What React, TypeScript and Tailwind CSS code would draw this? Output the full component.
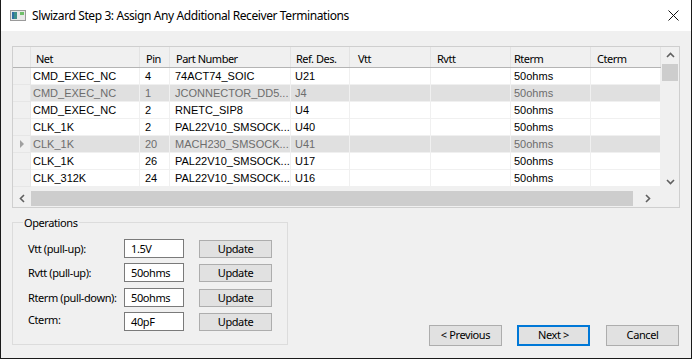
import { Fragment } from "react";

const cols = [
  { title: "Net", w: "w-[109px]", hp: "pl-[5px]", cp: "pl-[2px]" },
  { title: "Pin", w: "w-[30px]", hp: "pl-[6px]", cp: "pl-[5px]" },
  { title: "Part Number", w: "w-[121px]", hp: "pl-[6px]", cp: "pl-[5px]" },
  { title: "Ref. Des.", w: "w-[59px]", hp: "pl-[5px]", cp: "pl-[4px]" },
  { title: "Vtt", w: "w-[81px]", hp: "pl-[8px]", cp: "pl-[4px]" },
  { title: "Rvtt", w: "w-[80px]", hp: "pl-[6px]", cp: "pl-[4px]" },
  { title: "Rterm", w: "w-[80px]", hp: "pl-[3px]", cp: "pl-[3px]" },
  { title: "Cterm", w: "w-[70px]", hp: "pl-[6px]", cp: "pl-[4px]" },
];

const rows = [
  { cells: ["CMD_EXEC_NC", "4", "74ACT74_SOIC", "U21", "", "", "50ohms", ""], dim: false, sel: false },
  { cells: ["CMD_EXEC_NC", "1", "JCONNECTOR_DD5...", "J4", "", "", "50ohms", ""], dim: true, sel: false },
  { cells: ["CMD_EXEC_NC", "2", "RNETC_SIP8", "U4", "", "", "50ohms", ""], dim: false, sel: false },
  { cells: ["CLK_1K", "2", "PAL22V10_SMSOCK...", "U40", "", "", "50ohms", ""], dim: false, sel: false },
  { cells: ["CLK_1K", "20", "MACH230_SMSOCK...", "U41", "", "", "50ohms", ""], dim: true, sel: true },
  { cells: ["CLK_1K", "26", "PAL22V10_SMSOCK...", "U17", "", "", "50ohms", ""], dim: false, sel: false },
  { cells: ["CLK_312K", "24", "PAL22V10_SMSOCK...", "U16", "", "", "50ohms", ""], dim: false, sel: false },
];

const ops = [
  { label: "Vtt (pull-up):", value: "1.5V" },
  { label: "Rvtt (pull-up):", value: "50ohms" },
  { label: "Rterm (pull-down):", value: "50ohms" },
  { label: "Cterm:", value: "40pF" },
];

const ui = "font-['Noto_Sans',sans-serif] text-[11px] tracking-[-0.4px] text-black";

const Chevron = ({ dir }: { dir: "up" | "down" | "left" | "right" }) => {
  const pts = {
    up: "1,6 4.5,2.5 8,6",
    down: "1,3 4.5,6.5 8,3",
    left: "6,1 2.5,4.5 6,8",
    right: "3,1 6.5,4.5 3,8",
  }[dir];
  return (
    <svg width="9" height="9" viewBox="0 0 9 9">
      <polyline points={pts} fill="none" stroke="#606060" strokeWidth="1.6" />
    </svg>
  );
};

const Grid = () => (
  <div className="w-[668px] h-[162px] border border-[#cfcfcf] bg-[#f0f0f0] flex flex-col">
    <div className="flex h-[143px]">
      <div className="flex flex-col w-[648px]">
        {/* header */}
        <div className={`flex h-[21px] bg-[#f0f0f0] border-b border-[#b4b4b4] ${ui} tracking-[-0.5px]`}>
          <div className="w-[18px] border-r border-[#e3e3e3]" />
          {cols.map((c) => (
            <div key={c.title} className={`${c.w} ${c.hp} border-r border-[#e3e3e3] flex items-center leading-none pt-[2px]`}>
              {c.title}
            </div>
          ))}
        </div>
        {rows.map((r, i) => (
          <div key={i} className={`flex h-[17px] font-['Liberation_Sans',sans-serif] text-[11px] ${r.dim ? "text-[#6d6d6d]" : "text-black"}`}>
            <div className="w-[18px] bg-[#f0f0f0] border-r border-b border-[#e6e6e6] flex items-center justify-center">
              {r.sel && (
                <svg width="6" height="8" viewBox="0 0 6 8">
                  <polygon points="1,0 5,4 1,8" fill="#a0a0a0" />
                </svg>
              )}
            </div>
            {r.cells.map((v, j) => (
              <div
                key={j}
                className={`${cols[j].w} ${cols[j].cp} ${r.dim ? "bg-[#e0e0e0]" : "bg-white"} border-r border-b border-[#f0f0f0] flex items-center leading-none whitespace-nowrap overflow-hidden`}
              >
                {v}
              </div>
            ))}
          </div>
        ))}
      </div>
      {/* vertical scrollbar */}
      <div className="w-[18px] flex flex-col bg-[#f0f0f0]">
        <div className="h-[17px] flex items-center justify-center">
          <Chevron dir="up" />
        </div>
        <div className="h-[17px] bg-[#cdcdcd] mx-[1px]" />
        <div className="flex-1" />
        <div className="h-[17px] flex items-center justify-center">
          <Chevron dir="down" />
        </div>
      </div>
    </div>
    {/* horizontal scrollbar */}
    <div className="flex h-[17px] bg-[#f0f0f0]">
      <div className="w-[18px] flex items-center justify-center">
        <Chevron dir="left" />
      </div>
      <div className="w-[602px] bg-[#cdcdcd] my-[1px]" />
      <div className="flex-1 flex items-center justify-center pr-[18px]">
        <Chevron dir="right" />
      </div>
    </div>
  </div>
);

const Button = ({ text, primary }: { text: string; primary?: boolean }) => (
  <div
    className={`w-[73px] h-[21px] bg-[#e1e1e1] flex items-center justify-center ${ui} ${primary ? "border-2 border-[#0078d7]" : "border border-[#adadad]"}`}
  >
    {text}
  </div>
);

export default function App() {
  return (
    <Fragment>
      <div className="w-[692px] h-[359px] flex flex-col border-x border-b border-[#1a1a1a] bg-[#f0f0f0] overflow-hidden">
        {/* title bar */}
        <div className="h-[31px] bg-white flex items-center shrink-0">
          <svg className="ml-[9px]" width="16" height="11" viewBox="0 0 16 11">
            <rect x="0.5" y="0.5" width="15" height="10" fill="#e8e8e8" stroke="#9a9a9a" />
            <rect x="2" y="2" width="5" height="7" fill="#3f8f8a" />
            <rect x="2" y="2" width="2" height="7" fill="#2e6fa3" />
            <rect x="10" y="2" width="4" height="3" fill="#6fbf6a" />
          </svg>
          <span className="ml-[6px] font-['Noto_Sans',sans-serif] text-[12px] tracking-[-0.4px] text-black">
            Slwizard Step 3: Assign Any Additional Receiver Terminations
          </span>
          <div className="ml-auto mr-[12px]">
            <svg width="11" height="11" viewBox="0 0 11 11">
              <path d="M0.5 0.5 L10.5 10.5 M10.5 0.5 L0.5 10.5" stroke="#111" strokeWidth="1" />
            </svg>
          </div>
        </div>

        {/* body */}
        <div className="flex-1 flex flex-col pl-[11px] pt-[15px]">
          <Grid />
          <div className="flex items-end mt-[14px]">
            <div className="relative w-[276px] h-[123px] border border-[#dcdcdc] mb-[1px]">
              <span className={`absolute left-[10px] top-[-8px] px-[1px] bg-[#f0f0f0] leading-[16px] ${ui}`}>
                Operations
              </span>
              <div className="flex flex-col pt-[16px] pl-[15px]">
                {ops.map((o, i) => (
                  <div key={o.label} className={`flex items-center ${i === 0 ? "" : i === 2 ? "mt-[6px]" : "mt-[5px]"}`}>
                    <div className={`w-[96px] whitespace-nowrap leading-none ${ui} ${i === 3 ? "-mt-[5px]" : ""}`}>
                      {o.label}
                    </div>
                    <div className={`w-[60px] h-[19px] bg-white border border-[#7a7a7a] flex items-center pl-[6px] leading-none ${ui}`}>
                      {o.value}
                    </div>
                    <div className={`ml-[15px] w-[73px] h-[18px] bg-[#e1e1e1] border border-[#adadad] flex items-center justify-center leading-none ${ui}`}>
                      Update
                    </div>
                  </div>
                ))}
              </div>
            </div>
            <div className="ml-auto mr-[12px] flex gap-[15px]">
              <Button text="< Previous" />
              <Button text="Next >" primary />
              <div className="ml-[1px]">
                <Button text="Cancel" />
              </div>
            </div>
          </div>
        </div>
      </div>
    </Fragment>
  );
}
